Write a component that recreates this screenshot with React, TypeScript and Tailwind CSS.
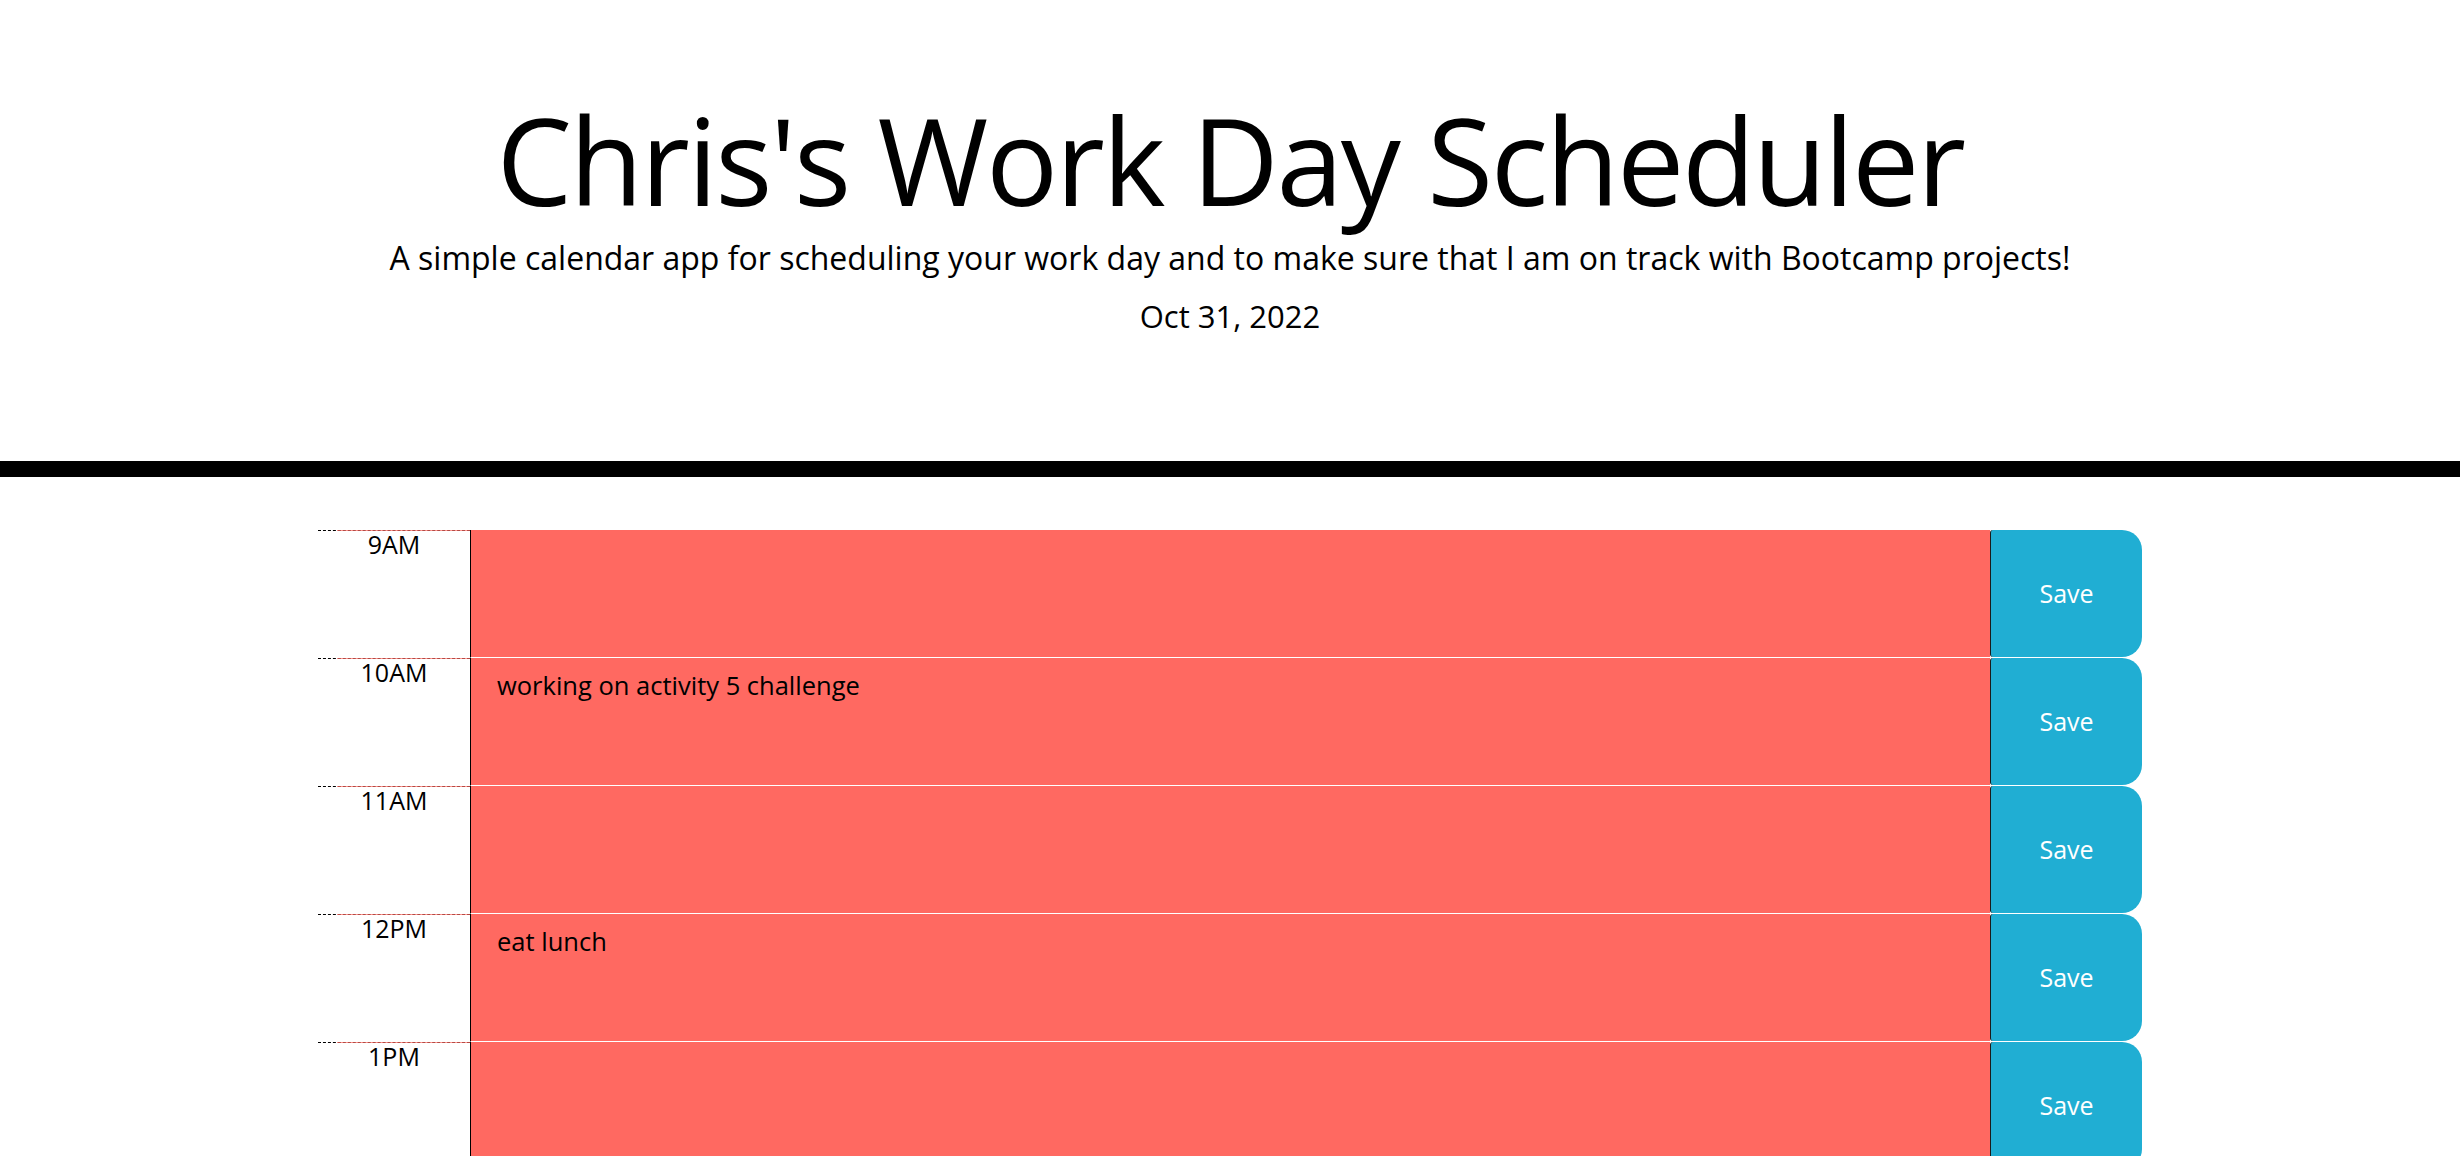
const hours = [
  { label: "9AM", text: "" },
  { label: "10AM", text: "working on activity 5 challenge" },
  { label: "11AM", text: "" },
  { label: "12PM", text: "eat lunch" },
  { label: "1PM", text: "" },
  { label: "2PM", text: "" },
  { label: "3PM", text: "" },
  { label: "4PM", text: "" },
  { label: "5PM", text: "" },
];

const App = () => {
  return (
    <div className="h-[1156px] w-full overflow-hidden bg-white text-black font-['Open_Sans',sans-serif]">
      {/* header */}
      <header className="flex flex-col items-center pt-[100px] text-center">
        <h1 className="text-[120px] leading-none font-normal tracking-[-0.02em]">Chris's Work Day Scheduler</h1>
        <p className="mt-[22px] text-[32px] leading-none">
          A simple calendar app for scheduling your work day and to make sure that I am on track with Bootcamp projects!
        </p>
        <p className="mt-[27px] text-[31px] leading-none">Oct 31, 2022</p>
      </header>

      <div className="mt-[129px] h-4 w-full bg-black" />

      {/* time blocks */}
      <div className="mx-auto mt-[53px] w-[1824px]">
        {hours.map((h) => (
          <div key={h.label} className="grid h-[128px] grid-cols-[152px_1fr_152px]">
            <div className="relative border-t border-dashed border-black text-center text-[25px] leading-none before:absolute before:left-[19px] before:right-0 before:top-[-1px] before:h-px before:bg-[#ff6961]/70 before:content-['']">
              <span className="relative top-px">{h.label}</span>
            </div>
            <div className="border-b border-l border-b-white border-l-black bg-[#ff6961] px-[26px] pt-[8px] text-[25.5px] leading-[1.5]">
              {h.text}
            </div>
            <button className="mb-px flex h-[127px] items-center justify-center rounded-l-[3px] rounded-r-[20px] border-l border-[#1a1a1a] bg-[#20aed3] text-[25px] text-white">
              Save
            </button>
          </div>
        ))}
      </div>
    </div>
  );
};

export default App;
